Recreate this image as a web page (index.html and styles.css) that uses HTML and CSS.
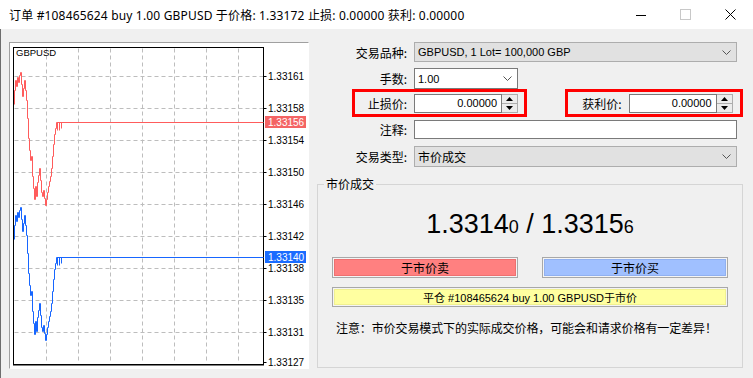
FILE: index.html
```html
<!DOCTYPE html>
<html lang="zh-CN">
<head>
    <meta charset="UTF-8">
    <meta name="viewport" content="width=device-width, initial-scale=1.0">
    <title>订单 #108465624</title>
    <link rel="stylesheet" href="styles.css">
</head>
<body>
    <div class="titlebar">
        <span class="title-text">订单 #108465624 buy 1.00 GBPUSD 于价格: 1.33172 止损: 0.00000 获利: 0.00000</span>
        <div class="win-controls">
            <div class="win-btn">
                <svg width="10" height="10" viewBox="0 0 10 10"><path d="M0 5.5H10" stroke="#000" stroke-width="1"/></svg>
            </div>
            <div class="win-btn">
                <svg width="11" height="11" viewBox="0 0 11 11"><rect x="0.5" y="0.5" width="10" height="10" fill="none" stroke="#c8c8c8"/></svg>
            </div>
            <div class="win-btn">
                <svg width="11" height="11" viewBox="0 0 11 11"><path d="M0.5 0.5L10.5 10.5M10.5 0.5L0.5 10.5" stroke="#000" stroke-width="1"/></svg>
            </div>
        </div>
    </div>

    <div class="content">
        <div class="chart-panel">
            <svg class="chart" width="298" height="325" viewBox="10 43 298 325">
                <g class="grid" stroke="#bdbdbd" stroke-dasharray="4 3" transform="translate(0.5 0.5)">
                    <path d="M46 48V363M78 48V363M110 48V363M142 48V363M174 48V363M206 48V363M238 48V363"/>
                    <path d="M14 76H263M14 108H263M14 140H263M14 172H263M14 204H263M14 236H263M14 268H263M14 300H263M14 332H263"/>
                </g>
                <g stroke="#000" transform="translate(0.5 0.5)">
                    <path d="M263 76H266M263 108H266M263 140H266M263 172H266M263 204H266M263 236H266M263 268H266M263 300H266M263 332H266M263 362H266"/>
                </g>
                <rect x="13.5" y="47.5" width="250" height="317" fill="none" stroke="#000"/>
                <path d="M13 365H264" stroke="#000"/>

                <text class="symbol" x="16" y="56">GBPUSD</text>

                <g class="axis">
                    <text x="268" y="80">1.33161</text>
                    <text x="268" y="112">1.33158</text>
                    <text x="268" y="144">1.33154</text>
                    <text x="268" y="176">1.33150</text>
                    <text x="268" y="208">1.33146</text>
                    <text x="268" y="240">1.33142</text>
                    <text x="268" y="272">1.33138</text>
                    <text x="268" y="304">1.33135</text>
                    <text x="268" y="336">1.33131</text>
                    <text x="268" y="366">1.33127</text>
                </g>

                <g fill="none" stroke-width="1" transform="translate(0.5 0.5)">
                    <path stroke="#ff5c5c" d="M14 104V90H15V80H16V86H17V77H18V82H19V75H20V72H21V84H22V96H23V88H24V80H25V90H26V100H27V118H28V138H29V150H30V160H31V156H32V176H33V188H34V199H35V186H36V196H37V182H38V175H39V168H40V180H41V192H42V196H43V190H44V198H45V205H46V199H47V192H48V186H49V181H50V176H51V168H52V156H53V144H54V134H55V128H56V122H263M57 122V130M59 122V130M61 122V128"/>
                    <path stroke="#1766ff" transform="translate(0 135)" d="M14 104V90H15V80H16V86H17V77H18V82H19V75H20V72H21V84H22V96H23V88H24V80H25V90H26V100H27V118H28V138H29V150H30V160H31V156H32V176H33V188H34V199H35V186H36V196H37V182H38V175H39V168H40V180H41V192H42V196H43V190H44V198H45V205H46V199H47V192H48V186H49V181H50V176H51V168H52V156H53V144H54V134H55V128H56V122H263M57 122V130M59 122V130M61 122V128"/>
                </g>

                <rect x="265" y="116" width="41" height="12" fill="#f46464"/>
                <text class="tag" x="268" y="126">1.33156</text>
                <rect x="265" y="251" width="41" height="12" fill="#1a6cff"/>
                <text class="tag" x="268" y="261">1.33140</text>
            </svg>
        </div>

        <div class="order-panel">
            <div class="row row-symbol">
                <span class="row-label">交易品种:</span>
                <div class="combo combo-list combo-wide">
                    <span>GBPUSD, 1 Lot= 100,000 GBP</span>
                    <svg class="chevron" width="9" height="5" viewBox="0 0 9 5"><path d="M0.5 0.5L4.5 4.5L8.5 0.5" fill="none" stroke="#555"/></svg>
                </div>
            </div>

            <div class="row row-volume">
                <span class="row-label">手数:</span>
                <div class="combo combo-edit combo-small">
                    <span>1.00</span>
                    <svg class="chevron" width="9" height="5" viewBox="0 0 9 5"><path d="M0.5 0.5L4.5 4.5L8.5 0.5" fill="none" stroke="#555"/></svg>
                </div>
            </div>

            <div class="row row-levels">
                <div class="level level-sl">
                    <span class="level-label">止损价:</span>
                    <div class="spin-edit">0.00000</div>
                    <div class="spin-btns">
                        <div class="spin-half"><svg width="7" height="4" viewBox="0 0 7 4"><path d="M0 4H7L3.5 0Z" fill="#000"/></svg></div>
                        <div class="spin-half"><svg width="7" height="4" viewBox="0 0 7 4"><path d="M0 0H7L3.5 4Z" fill="#000"/></svg></div>
                    </div>
                </div>
                <div class="level level-tp">
                    <span class="level-label">获利价:</span>
                    <div class="spin-edit">0.00000</div>
                    <div class="spin-btns">
                        <div class="spin-half"><svg width="7" height="4" viewBox="0 0 7 4"><path d="M0 4H7L3.5 0Z" fill="#000"/></svg></div>
                        <div class="spin-half"><svg width="7" height="4" viewBox="0 0 7 4"><path d="M0 0H7L3.5 4Z" fill="#000"/></svg></div>
                    </div>
                </div>
            </div>

            <div class="row row-comment">
                <span class="row-label">注释:</span>
                <div class="edit"></div>
            </div>

            <div class="row row-type">
                <span class="row-label">交易类型:</span>
                <div class="combo combo-list combo-wide">
                    <span class="cjk">市价成交</span>
                    <svg class="chevron" width="9" height="5" viewBox="0 0 9 5"><path d="M0.5 0.5L4.5 4.5L8.5 0.5" fill="none" stroke="#555"/></svg>
                </div>
            </div>

            <fieldset class="market">
                <legend>市价成交</legend>
                <div class="quote">1.3314<span class="pip">0</span> / 1.3315<span class="pip">6</span></div>
                <div class="trade-buttons">
                    <div class="btn btn-sell">于市价卖</div>
                    <div class="btn btn-buy">于市价买</div>
                </div>
                <div class="btn btn-close">平仓 #108465624 buy 1.00 GBPUSD于市价</div>
                <p class="notice">注意：市价交易模式下的实际成交价格，可能会和请求价格有一定差异！</p>
            </fieldset>
        </div>
    </div>
</body>
</html>
```

FILE: styles.css
```css
* {
    margin: 0;
    padding: 0;
    box-sizing: border-box;
}
html, body {
    width: 753px;
    height: 378px;
    overflow: hidden;
}
body {
    font-family: "Noto Sans CJK SC", sans-serif;
    font-size: 12px;
    color: #000;
    background: #f0f0f0;
}
.titlebar {
    height: 29px;
    background: #fff;
    display: flex;
    align-items: center;
    padding-left: 9px;
}
.title-text {
    flex: 1;
    white-space: nowrap;
    font-family: "Noto Sans", "Noto Sans CJK SC", sans-serif;
    font-size: 12px;
    letter-spacing: 0.17px;
}
.win-controls {
    display: flex;
    height: 29px;
}
.win-btn {
    width: 45px;
    display: flex;
    align-items: center;
    justify-content: center;
}
.content {
    display: flex;
    height: 349px;
    border-left: 1px solid #6e6e6e;
}
.chart-panel {
    margin: 13px 0 0 8px;
    width: 300px;
    height: 327px;
    border: 1px solid;
    border-color: #a0a0a0 #fff #fff #a0a0a0;
    background: #fff;
}
.chart {
    display: block;
    font-family: "Liberation Sans", sans-serif;
}
.chart .symbol {
    font-size: 9.5px;
}
.chart .axis text {
    font-size: 10px;
}
.chart .tag {
    font-size: 10px;
    fill: #fff;
}
.order-panel {
    margin-left: 8px;
    width: 426px;
}
.row {
    display: flex;
    align-items: center;
}
.row-label {
    width: 90px;
    margin-right: 7px;
    text-align: right;
    white-space: nowrap;
}
.row-symbol {
    margin-top: 13px;
    height: 20px;
}
.row-volume {
    margin-top: 6px;
    height: 21px;
}
.row-levels {
    height: 28px;
}
.row-comment {
    margin-top: 3px;
    height: 19px;
}
.row-type {
    margin-top: 7px;
    height: 21px;
}
.combo {
    display: flex;
    align-items: center;
    height: 100%;
    padding-left: 3px;
    font-family: "Liberation Sans", "Noto Sans CJK SC", sans-serif;
    font-size: 11px;
}
.combo .cjk {
    font-family: "Noto Sans CJK SC", sans-serif;
    font-size: 12px;
}
.combo-list {
    background: #e1e1e1;
    border: 1px solid #adadad;
}
.combo-edit {
    background: #fff;
    border: 1px solid #7a7a7a;
}
.combo-wide {
    width: 323px;
}
.combo-small {
    width: 104px;
}
.chevron {
    margin-left: auto;
    margin-right: 5px;
}
.level {
    display: flex;
    align-items: center;
    height: 28px;
    border: 3px solid #f00;
}
.level-sl {
    margin-left: 35px;
    width: 177px;
}
.level-tp {
    margin-left: 38px;
    width: 181px;
}
.level-label {
    margin-right: 7px;
    text-align: right;
    white-space: nowrap;
}
.level-sl .level-label {
    width: 52px;
}
.level-tp .level-label {
    width: 54px;
}
.spin-edit {
    width: 88px;
    height: 19px;
    line-height: 17px;
    border: 1px solid #7a7a7a;
    background: #fff;
    text-align: right;
    padding-right: 4px;
    font-family: "Liberation Sans", sans-serif;
    font-size: 11px;
}
.spin-btns {
    width: 16px;
    height: 19px;
    display: flex;
    flex-direction: column;
    border: 1px solid #adadad;
    border-left: none;
    background: #fff;
}
.spin-half {
    flex: 1;
    display: flex;
    align-items: center;
    justify-content: center;
    background: #ececec;
}
.spin-half + .spin-half {
    border-top: 1px solid #adadad;
}
.edit {
    width: 323px;
    height: 19px;
    border: 1px solid #7a7a7a;
    background: #fff;
}
.market {
    margin-top: 9px;
    width: 426px;
    height: 192px;
    border: 1px solid #d5d5d5;
    padding: 0;
}
.market legend {
    margin-left: 6px;
    padding: 0 2px;
    line-height: 16px;
    font-size: 12px;
}
.quote {
    margin-top: 16px;
    height: 32px;
    line-height: 32px;
    text-align: center;
    font-family: "Liberation Sans", sans-serif;
    font-size: 27px;
}
.quote .pip {
    font-size: 18px;
}
.trade-buttons {
    display: flex;
    gap: 24px;
    margin-top: 17px;
    padding: 0 14px;
}
.btn {
    display: flex;
    align-items: center;
    justify-content: center;
    border: 1px solid #a8a8a8;
    white-space: nowrap;
}
.btn-sell, .btn-buy {
    width: 186px;
    height: 21px;
    font-size: 12px;
}
.btn-sell {
    background: #ff8080;
    box-shadow: inset 0 0 0 1px #f4f4f4, inset 0 0 0 2px #ee7070;
}
.btn-buy {
    background: #a0c0ff;
    box-shadow: inset 0 0 0 1px #f4f4f4, inset 0 0 0 2px #90b0f0;
}
.btn-close {
    margin: 9px 0 0 14px;
    width: 396px;
    height: 20px;
    font-family: "Liberation Sans", "Noto Sans CJK SC", sans-serif;
    font-size: 11px;
    background: #ffffa0;
    box-shadow: inset 0 0 0 1px #f4f4f4, inset 0 0 0 2px #f0f090;
}
.notice {
    margin: 13px 0 0 18px;
    line-height: 16px;
    font-size: 12px;
    letter-spacing: -0.1px;
    white-space: nowrap;
}
```
